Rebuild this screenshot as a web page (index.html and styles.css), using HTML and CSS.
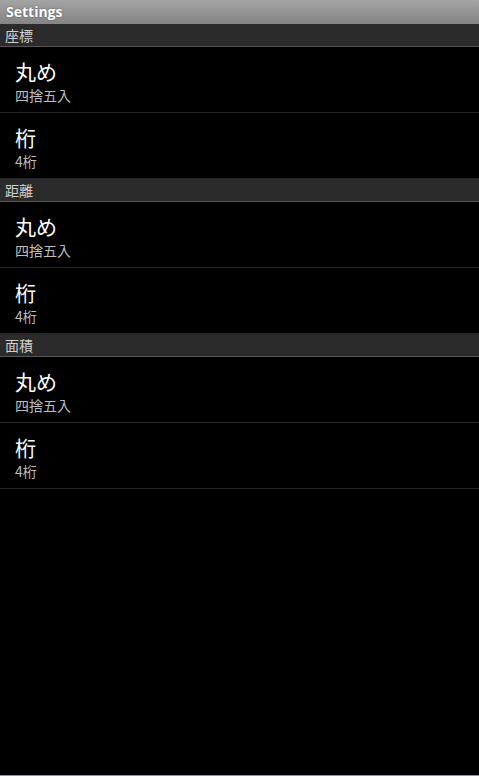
FILE: index.html
```html
<!DOCTYPE html>
<html lang="ja">
<head>
    <meta charset="UTF-8">
    <meta name="viewport" content="width=device-width, initial-scale=1.0">
    <title>Settings</title>
    <link rel="stylesheet" href="styles.css">
</head>
<body>
<div class="title-bar">Settings</div>

<div class="category">座標</div>
<div class="pref">
    <div class="pref-title">丸め</div>
    <div class="pref-summary">四捨五入</div>
</div>
<div class="pref">
    <div class="pref-title">桁</div>
    <div class="pref-summary">4桁</div>
</div>

<div class="category">距離</div>
<div class="pref">
    <div class="pref-title">丸め</div>
    <div class="pref-summary">四捨五入</div>
</div>
<div class="pref">
    <div class="pref-title">桁</div>
    <div class="pref-summary">4桁</div>
</div>

<div class="category">面積</div>
<div class="pref">
    <div class="pref-title">丸め</div>
    <div class="pref-summary">四捨五入</div>
</div>
<div class="pref">
    <div class="pref-title">桁</div>
    <div class="pref-summary">4桁</div>
</div>

<div class="bottom-edge"></div>
</body>
</html>
```

FILE: styles.css
```css
html, body {
    height: 100%;
}
body {
    margin: 0;
    background-color: #000;
    font-family: "Noto Sans CJK JP", "DejaVu Sans", sans-serif;
    display: flex;
    flex-direction: column;
    overflow: hidden;
}
.title-bar {
    height: 24px;
    line-height: 23px;
    padding-left: 6px;
    background: linear-gradient(#a4a4a4, #848484);
    color: #fff;
    font-family: "Open Sans", "DejaVu Sans", sans-serif;
    font-weight: bold;
    font-size: 14px;
    text-shadow: 0 0 2px #555;
}
.category {
    height: 22px;
    line-height: 22px;
    padding-left: 5px;
    background-color: #2b2b2b;
    border-bottom: 1px solid #555;
    color: #d0d0d0;
    font-size: 14px;
}
.pref {
    box-sizing: border-box;
    height: 66px;
    padding: 12px 0 0 15px;
    border-bottom: 1px solid #262626;
}
.pref-title {
    color: #fff;
    font-size: 21px;
    line-height: 24px;
}
.pref-summary {
    margin-top: 4px;
    color: #bdbdbd;
    font-size: 14px;
    line-height: 16px;
}
.bottom-edge {
    margin-top: auto;
    height: 1px;
    background-color: #8b97a3;
}
```
